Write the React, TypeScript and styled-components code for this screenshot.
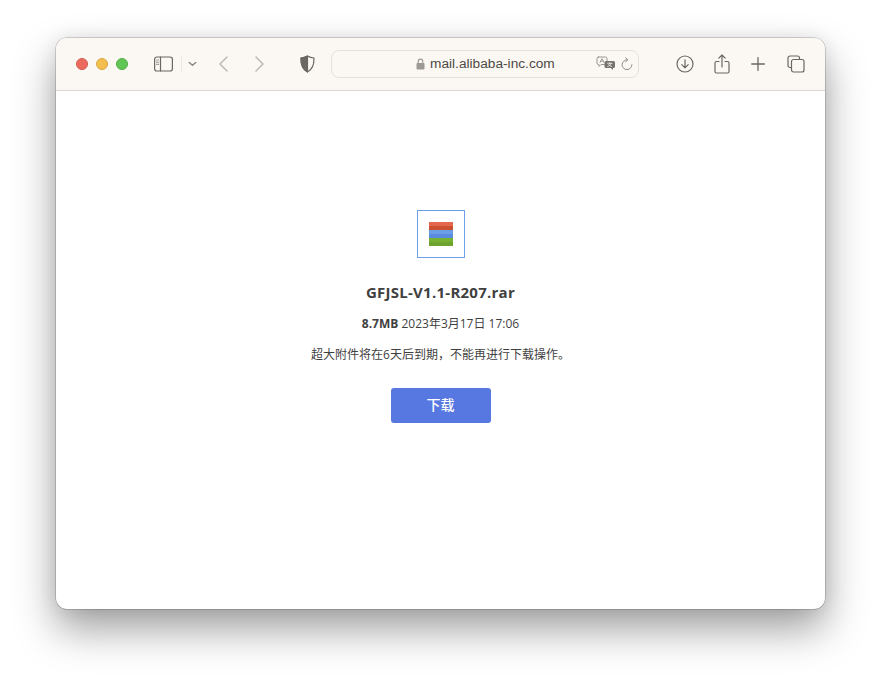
import React from "react";
import styled, { createGlobalStyle } from "styled-components";

const Global = createGlobalStyle`
  html, body { margin: 0; padding: 0; background: #fff; }
  body { width: 881px; height: 683px; overflow: hidden; font-family: "Open Sans", "Noto Sans CJK SC", sans-serif; }
`;
const Page = styled.div`
  box-sizing: border-box;
  width: 881px;
  height: 683px;
  padding: 38px 56px 74px;
`;
const Win = styled.div`
  height: 100%;
  display: flex;
  flex-direction: column;
  border-radius: 11px;
  overflow: hidden;
  background: #fff;
  box-shadow: 0 0 0 0.5px rgba(0,0,0,.3), 0 20px 42px rgba(0,0,0,.38), 0 0 18px rgba(0,0,0,.08);
`;
const Bar = styled.header`
  box-sizing: border-box;
  height: 53px;
  flex: none;
  display: flex;
  align-items: center;
  background: #fbf8f3;
  border-bottom: 1px solid #d9d7d4;
  padding: 0 0 1px 20px;
`;
const Lights = styled.div`
  display: flex;
  gap: 8px;
  margin-right: 26px;
`;
const Light = styled.span<{ $c: string; $b: string }>`
  width: 12px;
  height: 12px;
  box-sizing: border-box;
  border-radius: 50%;
  background: ${p => p.$c};
  border: 0.5px solid ${p => p.$b};
`;
const Ico = styled.svg<{ $ml?: number }>`
  display: block;
  flex: none;
  margin-left: ${p => p.$ml ?? 0}px;
  fill: none;
  stroke-linecap: round;
  stroke-linejoin: round;
`;
const Divider = styled.span`
  width: 1px;
  height: 18px;
  background: #ebe8e3;
  margin-left: 8px;
`;
const Address = styled.div`
  box-sizing: border-box;
  width: 308px;
  height: 28px;
  margin-left: 16px;
  display: flex;
  align-items: center;
  border: 1px solid #e4e1dc;
  border-radius: 8px;
  background: #fbf8f3;
  padding-left: 84px;
`;
const Url = styled.span`
  font: 13.7px/16px "Liberation Sans", Arial, sans-serif;
  color: #4d4a46;
  margin-left: 5px;
`;
const Content = styled.main`
  flex: 1;
  display: flex;
  flex-direction: column;
  align-items: center;
  padding-top: 119px;
  color: #3a3a3a;
`;
const FileBox = styled.div`
  box-sizing: border-box;
  width: 48px;
  height: 48px;
  border: 1px solid #6f9fe8;
  display: flex;
  align-items: center;
  justify-content: center;
`;
const Stack = styled.div`
  width: 24px;
  display: flex;
  flex-direction: column;
`;
const Band = styled.span<{ $a: string; $b: string }>`
  display: block;
  height: 8px;
  background: linear-gradient(${p => p.$a} 0 50%, ${p => p.$b} 50% 100%);
`;
const Name = styled.h1`
  margin: 25px 0 0;
  font: 700 15px/19px "Open Sans", "Noto Sans CJK SC", sans-serif;
  letter-spacing: 0.25px;
  color: #404040;
`;
const Meta = styled.p`
  margin: 13px 0 0;
  font: 12px/17px "Open Sans", "Noto Sans CJK SC", sans-serif;
  color: #3f3f3f;
  b { font-weight: 700; }
`;
const Note = styled.p`
  margin: 14px 0 0;
  font: 12px/17px "Open Sans", "Noto Sans CJK SC", sans-serif;
  color: #3f3f3f;
`;
const Btn = styled.button`
  margin-top: 25px;
  width: 100px;
  height: 35px;
  border: 0;
  border-radius: 3px;
  background: #5778e0;
  color: #fff;
  font: 500 14px/33px "Noto Sans CJK SC", sans-serif;
  padding: 0 0 2px;
`;

const S = "#6b6762";
const G = "#bcb9b4";

export default function App() {
  return (
    <>
      <Global />
      <Page>
        <Win>
          <Bar>
            <Lights>
              <Light $c="#ec6a5e" $b="#d5594e" />
              <Light $c="#f4bf4f" $b="#d9a63f" />
              <Light $c="#61c554" $b="#52ad46" />
            </Lights>
            <Ico width="19" height="16" viewBox="0 0 19 16" stroke={S} strokeWidth="1.2">
              <rect x="0.6" y="1" width="17.8" height="14" rx="2.2" />
              <path d="M6.500 1v14" />
              <path d="M2.400 4h2.200M2.400 6.200h2.200M2.400 8.400h2.200" stroke="#a5a29d" />
            </Ico>
            <Divider />
            <Ico $ml={6} width="9" height="6" viewBox="0 0 9 6" stroke="#85817c" strokeWidth="1.300">
              <path d="M1.200 1.500 4.500 4.300l3.300-2.800" />
            </Ico>
            <Ico $ml={21} width="11" height="16" viewBox="0 0 11 16" stroke={G} strokeWidth="1.500">
              <path d="M9 1 2 8l7 7" />
            </Ico>
            <Ico $ml={25} width="11" height="16" viewBox="0 0 11 16" stroke={G} strokeWidth="1.500">
              <path d="M2 1l7 7-7 7" />
            </Ico>
            <Ico $ml={35} width="15" height="18" viewBox="0 0 15 18" stroke={S} strokeWidth="1.200">
              <path d="M7.500 1C5.500 2.200 3.400 2.800 1 3c-.2 6.500 1.600 11.400 6.500 14C12.400 14.400 14.200 9.500 14 3c-2.400-.2-4.500-.8-6.500-2Z" />
              <path d="M7.500 1C5.500 2.200 3.400 2.800 1 3c-.2 6.500 1.600 11.400 6.500 14Z" fill={S} />
            </Ico>
            <Address>
              <Ico width="9" height="12" viewBox="0 0 9 12">
                <path d="M2.200 5V3.400a2.300 2.300 0 0 1 4.600 0V5" stroke="#9c9995" strokeWidth="1.100" />
                <rect x="0.500" y="5" width="8" height="6.500" rx="1" fill="#9c9995" />
              </Ico>
              <Url>mail.alibaba-inc.com</Url>
              <Ico $ml={41} width="20" height="15" viewBox="0 0 20 15">
                <path d="M2.500 1h7A1.500 1.500 0 0 1 11 2.500V7a1.500 1.500 0 0 1-1.500 1.500H5L3 10.500V8.500h-.5A1.500 1.500 0 0 1 1 7V2.500A1.500 1.500 0 0 1 2.500 1Z" stroke="#8f8c87" strokeWidth="0.900" />
                <path d="M4 6.500 6 2.600l2 3.900M4.700 5.200h2.600" stroke="#8f8c87" strokeWidth="0.800" />
                <path d="M10 5h7.500A1.500 1.500 0 0 1 19 6.500v4a1.500 1.500 0 0 1-1.500 1.500H17v2l-2.200-2H10a1.500 1.500 0 0 1-1.500-1.500v-4A1.500 1.500 0 0 1 10 5Z" fill="#77736e" />
                <path d="M11.500 7.300h4.600M13.800 6.500v.8M15.200 7.300c-.5 1.600-1.800 2.700-3.500 3.200M12.500 8.300c.6 1 1.700 1.800 3 2.200" stroke="#fbf8f3" strokeWidth="0.700" />
              </Ico>
              <Ico $ml={5} width="12" height="14" viewBox="0 0 12 14" stroke="#8f8c87" strokeWidth="1">
                <path d="M6 2.800a4.900 4.900 0 1 0 4.900 4.900" />
                <path d="M4.700 0.800 6.900 2.800 4.700 4.800" />
              </Ico>
            </Address>
            <Ico $ml={37} width="18" height="18" viewBox="0 0 18 18" stroke={S} strokeWidth="1.200">
              <circle cx="9" cy="9" r="8" />
              <path d="M9 4.800v8M5.800 9.700 9 12.900l3.200-3.200" />
            </Ico>
            <Ico $ml={20} width="16" height="20" viewBox="0 0 16 20" stroke={S} strokeWidth="1.200">
              <path d="M5 7.500H2.500A1.500 1.500 0 0 0 1 9v8.500A1.500 1.500 0 0 0 2.500 19h11a1.500 1.500 0 0 0 1.500-1.500V9a1.500 1.500 0 0 0-1.500-1.500H11" />
              <path d="M8 13V1.200M4.800 4.200 8 1l3.200 3.200" />
            </Ico>
            <Ico $ml={21} width="14" height="14" viewBox="0 0 14 14" stroke={S} strokeWidth="1.300">
              <path d="M7 .7v12.600M.7 7h12.600" />
            </Ico>
            <Ico $ml={22} width="18" height="18" viewBox="0 0 18 18" stroke={S} strokeWidth="1.200">
              <path d="M3.800 12.500H3a2 2 0 0 1-2-2V3a2 2 0 0 1 2-2h7.500a2 2 0 0 1 2 2v.9" />
              <rect x="4.500" y="4.500" width="12.500" height="12.500" rx="2" />
            </Ico>
          </Bar>
          <Content>
            <FileBox>
              <Stack>
                <Band $a="#e5674e" $b="#c9512f" />
                <Band $a="#6a9fe8" $b="#5a8bdf" />
                <Band $a="#76b131" $b="#6fa32f" />
              </Stack>
            </FileBox>
            <Name>GFJSL-V1.1-R207.rar</Name>
            <Meta><b>8.7MB</b> 2023年3月17日 17:06</Meta>
            <Note>超大附件将在6天后到期，不能再进行下载操作。</Note>
            <Btn>下载</Btn>
          </Content>
        </Win>
      </Page>
    </>
  );
}
